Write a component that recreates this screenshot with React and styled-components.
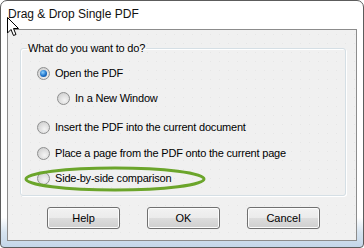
import React from "react";
import styled, { createGlobalStyle } from "styled-components";

const GlobalStyle = createGlobalStyle`
  html, body {
    margin: 0;
    padding: 0;
    background: #ffffff;
  }
  body {
    font-family: "Liberation Sans", Arial, sans-serif;
  }
`;

const Window = styled.div`
  position: relative;
  box-sizing: border-box;
  width: 364px;
  height: 248px;
  border: 1px solid #5c5c5c;
  border-radius: 7px 7px 4px 4px;
  background: linear-gradient(to bottom, #ffffff 0%, #ffffff 88%, #d6e3ef 94%, #c4d6e8 100%);
  display: flex;
  flex-direction: column;
  padding: 0 6px 6px 6px;
`;

const TitleBar = styled.div`
  height: 28px;
  display: flex;
  align-items: center;
  padding-left: 1px;
  padding-bottom: 2px;
  box-sizing: border-box;
  font-size: 12px;
  color: #111111;
`;

const Client = styled.div`
  flex: 1;
  border: 1px solid #8c8c8c;
  background-color: #f0f0f0;
  background-image: radial-gradient(circle, #e6e6e6 0.6px, transparent 0.9px);
  background-size: 9px 9px;
  display: flex;
  flex-direction: column;
  padding: 12px 10px 0 12px;
`;

const Group = styled.fieldset`
  margin: 0;
  border: 1px solid #d5dfe5;
  border-radius: 3px;
  box-shadow: inset 1px 1px 0 #ffffff, 1px 1px 0 #ffffff;
  padding: 12px 0 8px 16px;
  height: 154px;
  box-sizing: border-box;
  display: flex;
  flex-direction: column;
`;

const Legend = styled.legend`
  font-size: 11px;
  color: #000;
  padding: 0 1px;
  margin-left: -10px;
  letter-spacing: -0.2px;
`;

const Option = styled.label`
  display: flex;
  align-items: center;
  gap: 5px;
  height: 14px;
  font-size: 11px;
  letter-spacing: -0.2px;
  color: #000;
  margin-left: ${(p) => (p.$indent ? "20px" : "0")};
  margin-top: ${(p) => p.$top}px;
`;

const Radio = styled.span`
  box-sizing: border-box;
  width: 13px;
  height: 13px;
  border-radius: 50%;
  border: 1px solid #8e8f8f;
  background: radial-gradient(circle at 60% 65%, #f4f4f4 0%, #dcdcdc 55%, #c6c6c6 100%);
  display: flex;
  align-items: center;
  justify-content: center;
  flex-shrink: 0;
  &::after {
    content: "";
    display: ${(p) => (p.$checked ? "block" : "none")};
    width: 7px;
    height: 7px;
    border-radius: 50%;
    background: radial-gradient(circle at 40% 35%, #8fd2ff 0%, #1d72c9 55%, #0a3f8a 100%);
  }
`;

const Buttons = styled.div`
  display: flex;
  gap: 27px;
  padding-left: 27px;
  margin-top: 11px;
`;

const Button = styled.button`
  box-sizing: border-box;
  width: 73px;
  height: 22px;
  border: 1px solid #707070;
  border-radius: 3px;
  font-family: "Liberation Sans", Arial, sans-serif;
  font-size: 11px;
  color: #000;
  padding: 0;
  background: linear-gradient(to bottom, #f2f2f2 0%, #ebebeb 50%, #dddddd 51%, #cfcfcf 100%);
  box-shadow: inset 0 0 0 1px #fcfcfc;
`;

const Highlight = styled.svg`
  position: absolute;
  left: 22px;
  top: 164px;
  pointer-events: none;
`;

const Cursor = styled.svg`
  position: absolute;
  left: 6px;
  top: 16px;
  pointer-events: none;
`;

const options = [
  { label: "Open the PDF", checked: true, top: 0 },
  { label: "In a New Window", indent: true, top: 11 },
  { label: "Insert the PDF into the current document", top: 15 },
  { label: "Place a page from the PDF onto the current page", top: 12 },
  { label: "Side-by-side comparison", top: 11 },
];

export default function App() {
  return (
    <>
      <GlobalStyle />
      <Window>
        <TitleBar>Drag &amp; Drop Single PDF</TitleBar>
        <Client>
          <Group>
            <Legend>What do you want to do?</Legend>
            {options.map((o) => (
              <Option key={o.label} $indent={o.indent} $top={o.top}>
                <Radio $checked={o.checked} />
                {o.label}
              </Option>
            ))}
          </Group>
          <Buttons>
            <Button>Help</Button>
            <Button>OK</Button>
            <Button>Cancel</Button>
          </Buttons>
        </Client>
        <Highlight width="184" height="28" viewBox="0 0 184 28">
          <ellipse cx="92" cy="14" rx="89" ry="11" fill="none" stroke="#6ba52b" strokeWidth="3" />
        </Highlight>
        <Cursor width="13" height="20" viewBox="0 0 13 20">
          <path d="M0.5 0.5 L0.5 16 L4 12.5 L6.5 18.5 L9 17.5 L6.5 11.5 L11.5 11.5 Z" fill="#ffffff" stroke="#000000" strokeWidth="1" strokeLinejoin="miter" />
        </Cursor>
      </Window>
    </>
  );
}
